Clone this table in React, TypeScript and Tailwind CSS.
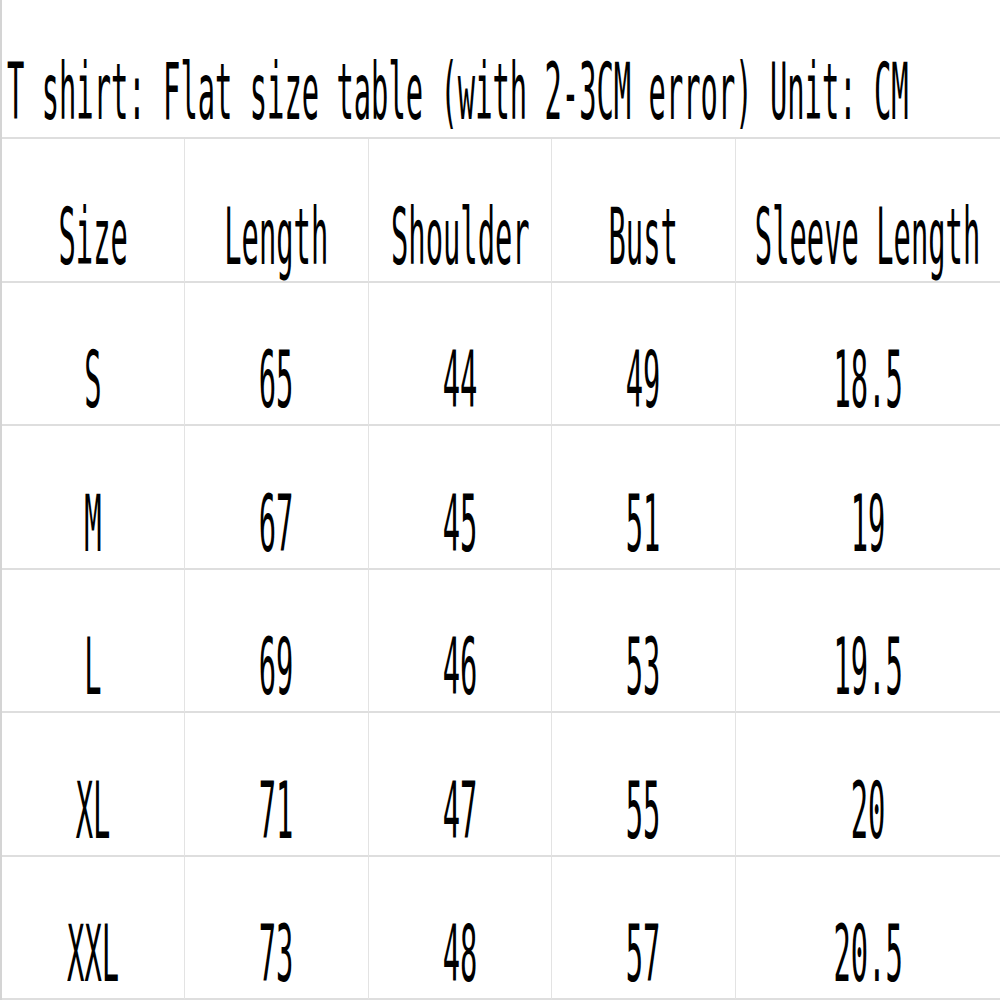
import React from "react"

const headers = ["Size", "Length", "Shoulder", "Bust", "Sleeve Length"]

const rows = [
  ["S", "65", "44", "49", "18.5"],
  ["M", "67", "45", "51", "19"],
  ["L", "69", "46", "53", "19.5"],
  ["XL", "71", "47", "55", "20"],
  ["XXL", "73", "48", "57", "20.5"],
]

function Tall({ children, left }: { children: React.ReactNode; left?: boolean }) {
  return (
    <span
      className={`inline-block shrink-0 whitespace-pre text-[40px] leading-none text-black font-['DejaVu_Sans_Mono',monospace] scale-x-[0.72] scale-y-[1.97] ${
        left ? "origin-bottom-left" : "origin-bottom"
      }`}
    >
      {children}
    </span>
  )
}

function Cell({ children, last }: { children: React.ReactNode; last?: boolean }) {
  return (
    <div
      className={`flex min-w-0 h-[143.5px] items-end justify-center pb-[5px] border-b-2 border-[#dedede] ${
        last ? "" : "border-r border-r-[#e3e3e3]"
      }`}
    >
      <Tall>{children}</Tall>
    </div>
  )
}

export default function App() {
  return (
    <div className="h-[1000px] w-[1000px] overflow-hidden bg-white border-l-2 border-[#d4d4d4]">
      <div className="flex h-[139px] items-end pb-[6px] pl-[5px] border-b-2 border-[#dedede]">
        <Tall left>T shirt: Flat size table (with 2-3CM error) Unit: CM</Tall>
      </div>
      <div className="grid w-[998px] grid-cols-[183px_184px_183px_184px_minmax(0,1fr)]">
        {headers.map((h, i) => (
          <Cell key={h} last={i === 4}>
            {h}
          </Cell>
        ))}
        {rows.map((r) =>
          r.map((v, i) => (
            <Cell key={r[0] + i} last={i === 4}>
              {v}
            </Cell>
          ))
        )}
      </div>
    </div>
  )
}
